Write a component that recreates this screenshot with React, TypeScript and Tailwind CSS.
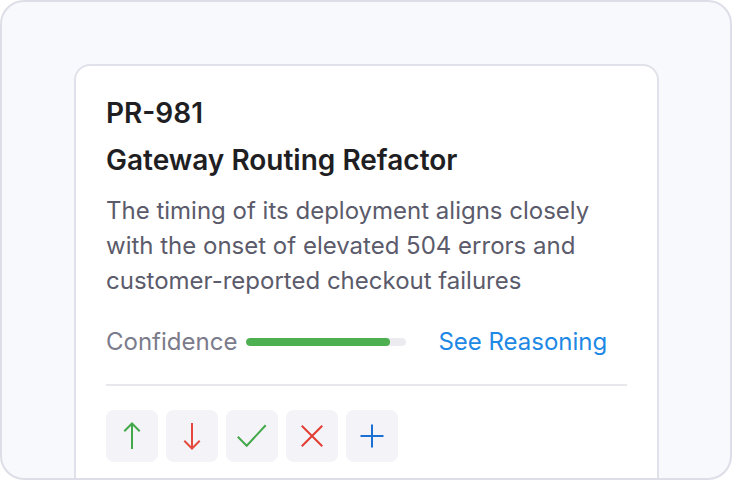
const font = "[font-family:Inter,'Noto_Sans',sans-serif]";

function ArrowUpIcon() {
  return (
    <svg width="52" height="52" viewBox="0 0 52 52" fill="none" stroke="#43a84a" strokeWidth="2" strokeLinecap="square">
      <path d="M26 14v24" />
      <path d="M19 20.5l7-7 7 7" />
    </svg>
  );
}

function ArrowDownIcon() {
  return (
    <svg width="52" height="52" viewBox="0 0 52 52" fill="none" stroke="#e4493d" strokeWidth="2" strokeLinecap="square">
      <path d="M26 14v24" />
      <path d="M19 31.5l7 7 7-7" />
    </svg>
  );
}

function CheckIcon() {
  return (
    <svg width="52" height="52" viewBox="0 0 52 52" fill="none" stroke="#43a84a" strokeWidth="2" strokeLinecap="square">
      <path d="M12.5 27.5l8.2 8.3L39 16" />
    </svg>
  );
}

function CloseIcon() {
  return (
    <svg width="52" height="52" viewBox="0 0 52 52" fill="none" stroke="#e23c32" strokeWidth="2" strokeLinecap="square">
      <path d="M16.5 16.5l19 19M35.5 16.5l-19 19" />
    </svg>
  );
}

function PlusIcon() {
  return (
    <svg width="52" height="52" viewBox="0 0 52 52" fill="none" stroke="#1a6fd2" strokeWidth="2" strokeLinecap="butt">
      <path d="M26 14.5v23M14.5 26h23" />
    </svg>
  );
}

const actions = [
  { label: "Upvote", icon: <ArrowUpIcon /> },
  { label: "Downvote", icon: <ArrowDownIcon /> },
  { label: "Accept", icon: <CheckIcon /> },
  { label: "Reject", icon: <CloseIcon /> },
  { label: "Add", icon: <PlusIcon /> },
];

export default function App() {
  const confidence = 90;

  return (
    <div
      className={`h-[480px] w-[732px] overflow-hidden rounded-3xl border-2 border-[#dddee8] bg-[#f8f9fd] pl-[72px] pr-[71px] pt-[62px] ${font}`}
    >
      <div className="rounded-2xl border-2 border-[#e0e1ea] bg-white px-[30px] pt-[30px] pb-[30px]">
        <div className="text-[28px] font-semibold leading-[34px] text-[#1e1e23]">PR-981</div>
        <h2 className="mt-[13px] text-[28px] font-semibold leading-[34px] text-[#1e1e23]">
          Gateway Routing Refactor
        </h2>
        <p className="mt-[16px] text-[24px] leading-[35px] text-[#5b5b6b]">
          The timing of its deployment aligns closely with the onset of elevated 504 errors and
          customer-reported checkout failures
        </p>

        <div className="mt-[29px] flex h-[30px] items-center">
          <span className="text-[24px] leading-[30px] text-[#7b7b8b]">Confidence</span>
          <div className="ml-[9px] h-2 w-[160px] overflow-hidden rounded-full bg-[#ececf0]">
            <div className="h-full rounded-full bg-[#4caf50]" style={{ width: `${confidence}%` }} />
          </div>
          <button type="button" className="ml-[32px] text-[24px] leading-[30px] text-[#1e88e5]">
            See Reasoning
          </button>
        </div>

        <div className="mt-[27px] h-[2px] bg-[#e7e7ec]" />

        <div className="mt-6 flex gap-2">
          {actions.map((a) => (
            <button
              key={a.label}
              type="button"
              aria-label={a.label}
              className="flex h-[52px] w-[52px] items-center justify-center rounded-lg bg-[#f3f3f8]"
            >
              {a.icon}
            </button>
          ))}
        </div>
      </div>
    </div>
  );
}
